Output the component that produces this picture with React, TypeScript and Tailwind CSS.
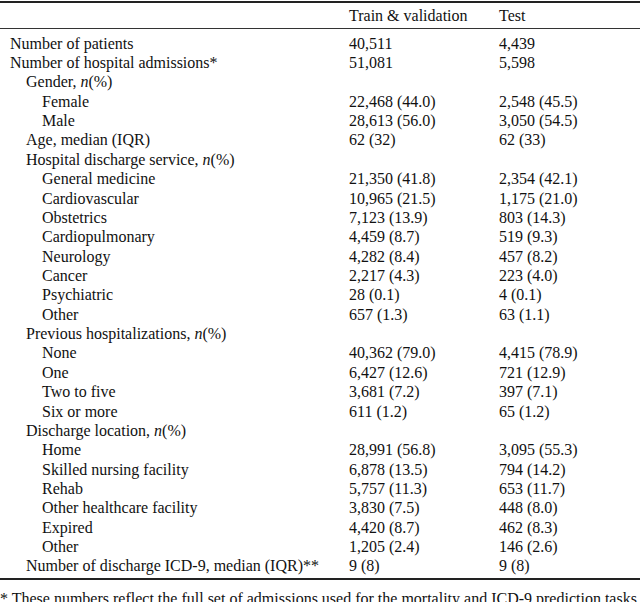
import { ReactNode } from 'react'

type Row = { label: ReactNode; level: 0 | 1 | 2; train?: string; test?: string }

const N = (
  <>
    <i>n</i>(%)
  </>
)

const rows: Row[] = [
  { label: 'Number of patients', level: 0, train: '40,511', test: '4,439' },
  { label: 'Number of hospital admissions*', level: 0, train: '51,081', test: '5,598' },
  { label: <>Gender, {N}</>, level: 1 },
  { label: 'Female', level: 2, train: '22,468 (44.0)', test: '2,548 (45.5)' },
  { label: 'Male', level: 2, train: '28,613 (56.0)', test: '3,050 (54.5)' },
  { label: 'Age, median (IQR)', level: 1, train: '62 (32)', test: '62 (33)' },
  { label: <>Hospital discharge service, {N}</>, level: 1 },
  { label: 'General medicine', level: 2, train: '21,350 (41.8)', test: '2,354 (42.1)' },
  { label: 'Cardiovascular', level: 2, train: '10,965 (21.5)', test: '1,175 (21.0)' },
  { label: 'Obstetrics', level: 2, train: '7,123 (13.9)', test: '803 (14.3)' },
  { label: 'Cardiopulmonary', level: 2, train: '4,459 (8.7)', test: '519 (9.3)' },
  { label: 'Neurology', level: 2, train: '4,282 (8.4)', test: '457 (8.2)' },
  { label: 'Cancer', level: 2, train: '2,217 (4.3)', test: '223 (4.0)' },
  { label: 'Psychiatric', level: 2, train: '28 (0.1)', test: '4 (0.1)' },
  { label: 'Other', level: 2, train: '657 (1.3)', test: '63 (1.1)' },
  { label: <>Previous hospitalizations, {N}</>, level: 1 },
  { label: 'None', level: 2, train: '40,362 (79.0)', test: '4,415 (78.9)' },
  { label: 'One', level: 2, train: '6,427 (12.6)', test: '721 (12.9)' },
  { label: 'Two to five', level: 2, train: '3,681 (7.2)', test: '397 (7.1)' },
  { label: 'Six or more', level: 2, train: '611 (1.2)', test: '65 (1.2)' },
  { label: <>Discharge location, {N}</>, level: 1 },
  { label: 'Home', level: 2, train: '28,991 (56.8)', test: '3,095 (55.3)' },
  { label: 'Skilled nursing facility', level: 2, train: '6,878 (13.5)', test: '794 (14.2)' },
  { label: 'Rehab', level: 2, train: '5,757 (11.3)', test: '653 (11.7)' },
  { label: 'Other healthcare facility', level: 2, train: '3,830 (7.5)', test: '448 (8.0)' },
  { label: 'Expired', level: 2, train: '4,420 (8.7)', test: '462 (8.3)' },
  { label: 'Other', level: 2, train: '1,205 (2.4)', test: '146 (2.6)' },
  { label: 'Number of discharge ICD-9, median (IQR)**', level: 1, train: '9 (8)', test: '9 (8)' }
]

const indent = ['pl-[10px]', 'pl-[26px]', 'pl-[42px]']

const App = () => {
  return (
    <div className="w-[640px] h-[602px] overflow-hidden bg-white text-[#111] font-['Liberation_Serif',serif] text-[16px] leading-none">
      <div className="mt-[1px] h-[2px] bg-[#222]" />
      {/* Header */}
      <div className="grid grid-cols-[349px_150px_1fr] h-[25px] items-center">
        <div />
        <div>Train &amp; validation</div>
        <div>Test</div>
      </div>
      <div className="h-px bg-[#333]" />
      {/* Body */}
      <div className="pt-[5px] pb-[2px]">
        {rows.map((row, i) => (
          <div key={i} className="grid grid-cols-[349px_150px_1fr] h-[19.37px] items-center whitespace-nowrap">
            <div className={indent[row.level]}>{row.label}</div>
            <div>{row.train}</div>
            <div>{row.test}</div>
          </div>
        ))}
      </div>
      <div className="h-[2px] bg-[#222]" />
      <div className="pt-[11px] whitespace-nowrap">
        * These numbers reflect the full set of admissions used for the mortality and ICD-9 prediction tasks.
      </div>
    </div>
  )
}

export default App
